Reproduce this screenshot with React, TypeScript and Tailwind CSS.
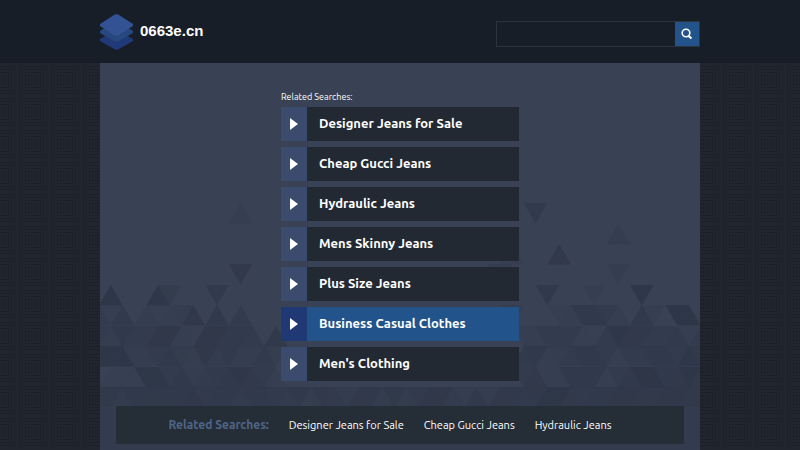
import React from "react"

const searches = [
	"Designer Jeans for Sale",
	"Cheap Gucci Jeans",
	"Hydraulic Jeans",
	"Mens Skinny Jeans",
	"Plus Size Jeans",
	"Business Casual Clothes",
	"Men's Clothing"
]

// one line per row of the triangle grid: cells are [column in half triangles, opacity in percent]
// "up" is the parity of the columns that point up
const rows: { top: number; up: number; cells: [number, number][] }[] = [
	{ top: 140, up: 1, cells: [[11, 25], [36, 55]] },
	{ top: 161, up: 1, cells: [[43, 35]] },
	{ top: 181, up: 0, cells: [[38, 70], [34, 25]] },
	{ top: 201, up: 0, cells: [[11, 70], [43, 35], [33, 30]] },
	{ top: 222, up: 0, cells: [[0, 90], [4, 85], [5, 40], [9, 55], [37, 60], [41, 25], [45, 80]] },
	{ top: 242, up: 1, cells: [[-1, 45], [0, 20], [1, 55], [3, 30], [4, 15], [5, 20], [6, 35], [7, 75], [9, 60], [11, 45], [34, 30], [38, 15], [39, 20], [40, 60], [41, 60], [42, 50], [43, 25], [45, 65], [46, 20], [48, 90], [49, 90]] },
	{ top: 263, up: 0, cells: [[-1, 50], [0, 35], [1, 60], [2, 50], [3, 50], [4, 75], [5, 75], [6, 20], [7, 15], [8, 75], [9, 75], [10, 55], [11, 55], [12, 50], [14, 65], [35, 20], [36, 20], [37, 50], [38, 50], [39, 50], [40, 15], [41, 10], [42, 45], [43, 80], [44, 70], [45, 60], [46, 45], [47, 45], [48, 55], [49, 25], [50, 50]] },
	{ top: 283, up: 1, cells: [[-1, 90], [0, 90], [1, 90], [2, 30], [3, 35], [4, 50], [5, 65], [6, 40], [7, 30], [8, 75], [9, 40], [10, 55], [11, 30], [12, 35], [13, 55], [14, 30], [35, 55], [36, 65], [37, 25], [38, 35], [39, 45], [40, 65], [41, 60], [42, 50], [43, 20], [44, 45], [45, 45], [46, 65], [47, 65], [48, 45], [49, 80], [50, 70]] },
	{ top: 304, up: 0, cells: [[0, 15], [1, 15], [2, 15], [3, 85], [4, 85], [5, 45], [6, 60], [7, 35], [8, 50], [9, 55], [10, 60], [11, 80], [12, 70], [13, 50], [14, 25], [35, 50], [36, 70], [37, 20], [38, 20], [39, 65], [40, 65], [41, 65], [42, 20], [43, 50], [44, 60], [45, 95], [46, 90], [47, 60], [48, 70], [49, 90], [50, 70]] },
	{ top: 324, up: 1, cells: [[-1, 65], [0, 65], [1, 50], [2, 65], [3, 65], [4, 65], [5, 65], [6, 60], [7, 75], [8, 55], [9, 60], [10, 60], [11, 50], [12, 65], [13, 60], [14, 55], [15, 45], [16, 65], [17, 30], [18, 70], [19, 55], [20, 40], [21, 70], [22, 60], [23, 40], [24, 65], [25, 40], [26, 55], [27, 75], [28, 75], [29, 45], [30, 35], [31, 60], [32, 35], [33, 70], [34, 60], [35, 55], [36, 65], [37, 90], [38, 90], [39, 70], [40, 55], [41, 60], [42, 65], [43, 75], [44, 75], [45, 70], [46, 70], [47, 75], [48, 75], [49, 70], [50, 70]] }
]

function Triangles() {
	return (
		<svg
			viewBox="0 0 600 387"
			preserveAspectRatio="xMidYMin slice"
			aria-hidden="true"
			className="absolute inset-0 w-full h-full">
			<rect y="345" width="600" height="42" fill="#2c3648" opacity="0.5" />
			{rows.map((row) =>
				row.cells.map(([col, opacity]) => {
					const x = col * 11.8 - 1
					const up = Math.abs(col) % 2 === row.up
					const d = up
						? `M${x} ${row.top + 20.5}h23.6l-11.8 -20.5z`
						: `M${x} ${row.top}h23.6l-11.8 20.5z`
					return <path key={`${row.top}-${col}`} d={d} fill="#2d3647" opacity={opacity / 100} />
				})
			)}
		</svg>
	)
}

function Backdrop() {
	return (
		<svg aria-hidden="true" className="absolute inset-0 w-full h-full">
			<defs>
				<pattern id="squares" width="32" height="32" x="17" y="1" patternUnits="userSpaceOnUse">
					<rect width="32" height="32" fill="#20252e" />
					<g fill="none" stroke="#1c2129">
						<rect x="2.5" y="2.5" width="27" height="27" />
						<rect x="5.5" y="5.5" width="21" height="21" />
						<rect x="8.5" y="8.5" width="15" height="15" />
						<rect x="11.5" y="11.5" width="9" height="9" />
						<rect x="14.5" y="14.5" width="3" height="3" />
					</g>
				</pattern>
			</defs>
			<rect width="100%" height="100%" fill="url(#squares)" />
		</svg>
	)
}

function Logo() {
	return (
		<svg width="33" height="38" viewBox="0 0 33 38" aria-hidden="true">
			<path d="M0 26L14 18h5L33 26v2L19 36q-2.500 1.500-5 0L0 28z" fill="#203a77" />
			<path d="M0 18L14 9h5L33 18v2L19 28q-2.500 1.500-5 0L0 20z" fill="#27477f" />
			<path d="M0 11L14 2q2.500-1.500 5 0L33 11v2L19 22q-2.500 1.500-5 0L0 13z" fill="#335293" />
		</svg>
	)
}

function SearchLink(props: { text: string; active: boolean }) {
	return (
		<a href="#" className={`flex h-[34px] ${props.active ? "bg-[#22548b]" : "bg-[#232932]"}`}>
			<span
				className={`flex items-center justify-center w-[26px] ${props.active ? "bg-[#203873]" : "bg-[#3a4b6e]"}`}>
				<svg width="8" height="12" viewBox="0 0 8 12" aria-hidden="true">
					<path d="M0 0L8 6L0 12z" fill="#fff" />
				</svg>
			</span>
			<span className="pl-3 text-[13px] leading-8 font-bold text-white">{props.text}</span>
		</a>
	)
}

export default function App() {
	return (
		<div className="relative min-h-screen flex flex-col bg-[#20252e] font-['Ubuntu','Noto_Sans',sans-serif]">
			<header className="relative z-10 bg-[#181e27]">
				<div className="flex items-center justify-between w-3/4 h-[63px] mx-auto">
					<div className="flex items-center gap-[7px]">
						<Logo />
						<h1 className="font-['Liberation_Sans',sans-serif] text-[15px] font-bold text-white">0663e.cn</h1>
					</div>
					<form className="flex h-[26px] mt-1 border border-[#2c333e]">
						<input type="search" aria-label="Search" className="w-[178px] px-2 text-xs text-white outline-none" />
						<button
							type="button"
							aria-label="Search"
							className="flex items-center justify-center w-6 bg-[#22548b] text-white">
							<svg width="12" height="12" viewBox="0 0 12 12" fill="none" stroke="currentColor" aria-hidden="true">
								<circle cx="5" cy="5" r="3.800" strokeWidth="1.600" />
								<path d="M7.500 8L10.500 10.500" strokeWidth="2.200" />
							</svg>
						</button>
					</form>
				</div>
			</header>
			<div className="relative grow flex">
				<Backdrop />
				<main className="relative flex flex-col w-3/4 mx-auto px-4 bg-[#394254]">
					<Triangles />
					<section className="relative w-[238px] mx-auto pt-7">
						<h2 className="mb-[3px] text-[9px] leading-[13px] text-white">Related Searches:</h2>
						<ul className="flex flex-col gap-[6px]">
							{searches.map((text) => (
								<li key={text}>
									<SearchLink text={text} active={text === "Business Casual Clothes"} />
								</li>
							))}
						</ul>
					</section>
					<nav className="relative flex items-center justify-center gap-5 h-[38px] mt-[25px] mb-1 pr-5 bg-[#252d36] text-[11px] text-white">
						<span className="text-xs font-bold text-[#4f6588]">Related Searches:</span>
						{searches.slice(0, 3).map((text) => (
							<a key={text} href="#">
								{text}
							</a>
						))}
					</nav>
				</main>
			</div>
		</div>
	)
}
